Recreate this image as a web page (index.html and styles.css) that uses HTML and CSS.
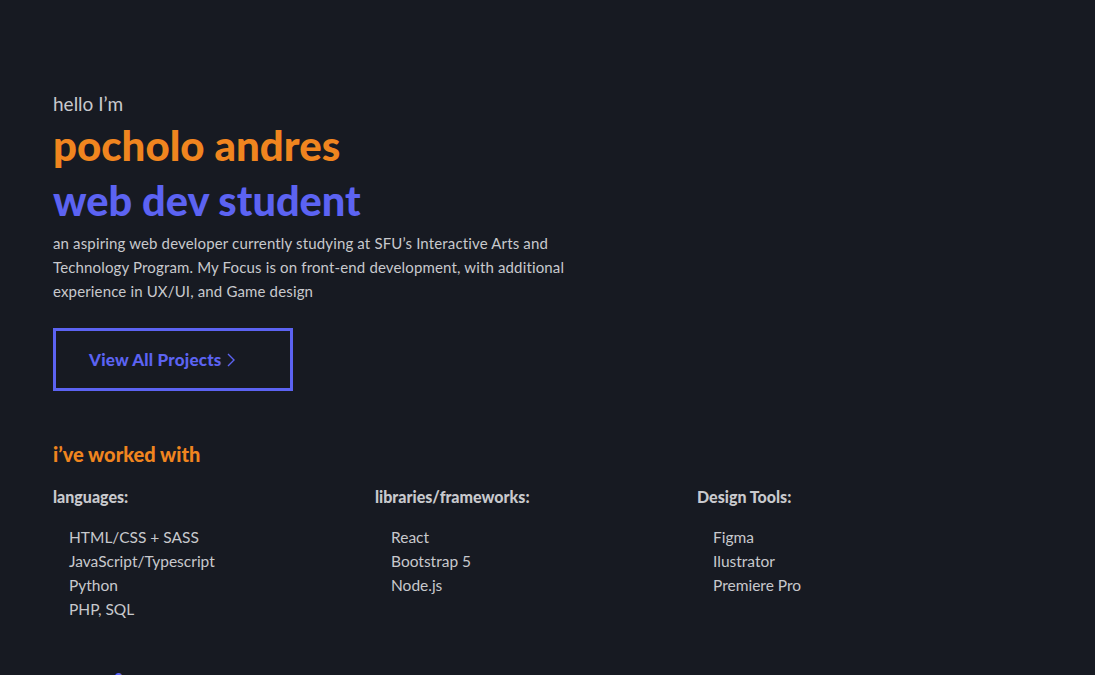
FILE: index.html
```html
<!DOCTYPE html>
<html lang="en">
<head>
<meta charset="utf-8">
<title>pocholo andres</title>
<link rel="stylesheet" href="styles.css">
</head>
<body>
<main class="page">
  <section class="hero">
    <p class="hello">hello I’m</p>
    <h1 class="name">pocholo andres</h1>
    <h2 class="role">web dev student</h2>
    <p class="intro">an aspiring web developer currently studying at SFU’s Interactive Arts and Technology Program. My Focus is on front-end development, with additional experience in UX/UI, and Game design</p>
    <a class="btn" href="#">View All Projects <svg class="chev" width="8" height="14" viewBox="0 0 8 14"><path d="M1 1l6 6-6 6" fill="none" stroke="currentColor" stroke-width="1.4"/></svg></a>
  </section>
  <section class="skills">
    <h3 class="skills-title">i’ve worked with</h3>
    <div class="cols">
      <div class="col">
        <h4 class="col-title">languages:</h4>
        <ul class="list">
          <li>HTML/CSS + SASS</li>
          <li>JavaScript/Typescript</li>
          <li>Python</li>
          <li>PHP, SQL</li>
        </ul>
      </div>
      <div class="col">
        <h4 class="col-title">libraries/frameworks:</h4>
        <ul class="list">
          <li>React</li>
          <li>Bootstrap 5</li>
          <li>Node.js</li>
        </ul>
      </div>
      <div class="col">
        <h4 class="col-title">Design Tools:</h4>
        <ul class="list">
          <li>Figma</li>
          <li>Ilustrator</li>
          <li>Premiere Pro</li>
        </ul>
      </div>
    </div>
  </section>
  <section class="next">
    <h3 class="next-title">projects</h3>
  </section>
</main>
</body>
</html>
```

FILE: styles.css
```css
html, body {
  margin: 0;
  padding: 0;
  background: #171a22;
  height: 100%;
  overflow: hidden;
}
body {
  font-family: "Lato", "Noto Sans", sans-serif;
  color: #c8c9cd;
}
.page {
  padding: 92px 53px 0;
}
.hello {
  margin: 0;
  font-size: 19px;
  line-height: 24px;
  color: #c8c9cd;
}
.name, .role {
  margin: 0;
  line-height: 55px;
  font-weight: 900;
}
.name { color: #f0851f; margin-top: 2px; font-size: 42px; }
.role { color: #5c63f2; font-size: 41.5px; }
.intro {
  margin: 3px 0 0;
  max-width: 540px;
  font-size: 15px;
  letter-spacing: 0.15px;
  line-height: 24px;
}
.btn {
  display: inline-flex;
  align-items: center;
  gap: 6px;
  box-sizing: border-box;
  width: 240px;
  height: 63px;
  margin-top: 25px;
  padding-left: 33px;
  border: 3px solid #5c63f2;
  color: #5c63f2;
  font-weight: 900;
  font-size: 17px;
  letter-spacing: 0.2px;
  text-decoration: none;
}
.chev { margin-top: 1px; }
.skills { margin-top: 48px; }
.skills-title {
  margin: 0;
  font-size: 20px;
  line-height: 30px;
  font-weight: 900;
  color: #f0851f;
}
.cols {
  display: grid;
  grid-template-columns: 322px 322px 322px;
  margin-top: 16px;
}
.col-title {
  margin: 0;
  font-size: 16px;
  line-height: 24px;
  font-weight: 900;
  color: #c8c9cd;
}
.list {
  list-style: none;
  margin: 16px 0 0;
  padding: 0 0 0 16px;
}
.list li {
  font-size: 15.5px;
  line-height: 24px;
}
.next { margin-top: 40px; }
.next-title {
  margin: 0;
  font-size: 40px;
  line-height: 55px;
  font-weight: 900;
  color: #5c63f2;
}
```
